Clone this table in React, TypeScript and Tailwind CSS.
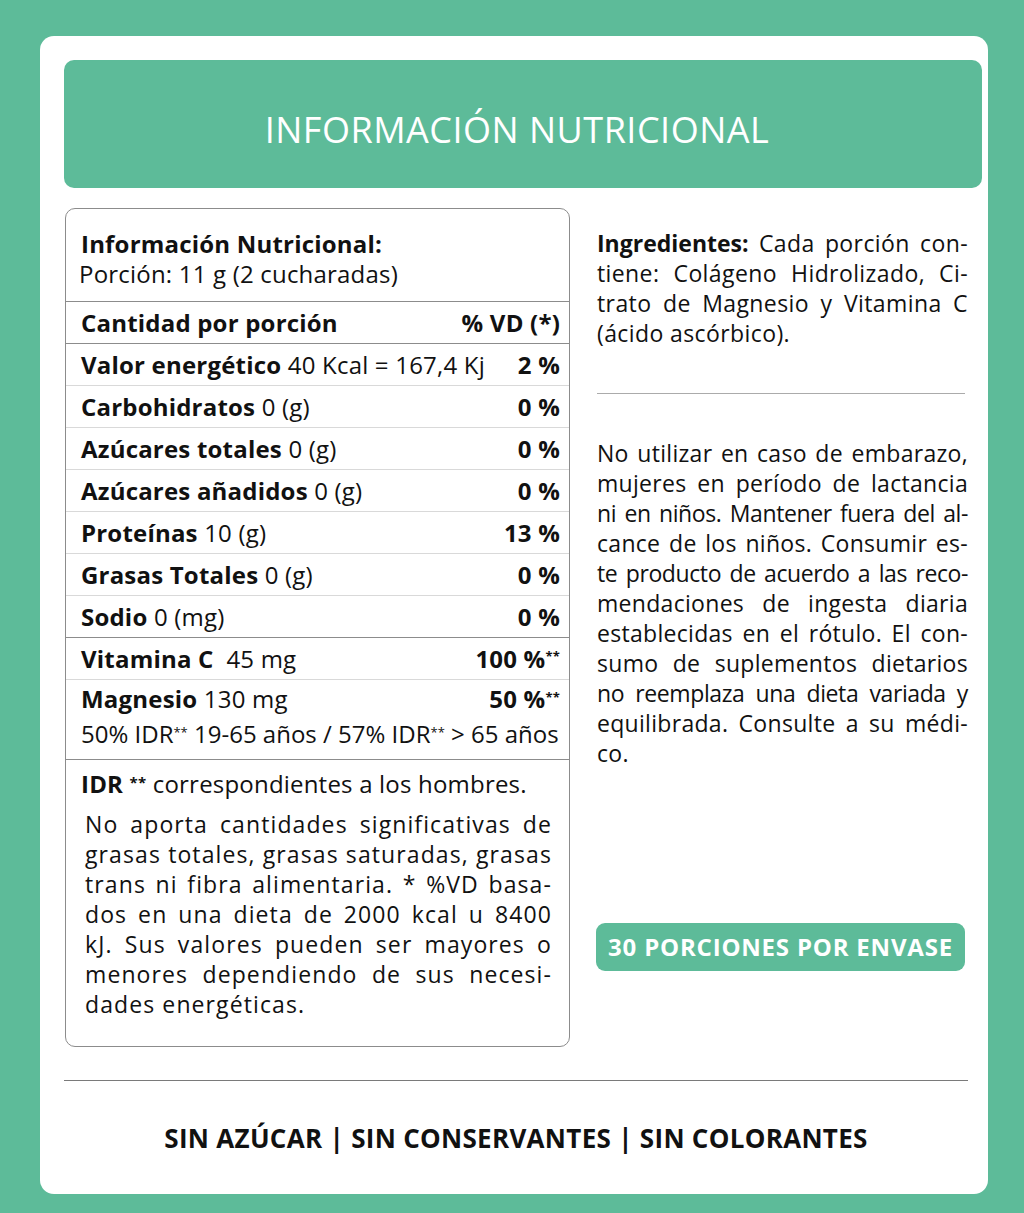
import React from 'react';

const FONT = '[font-family:Open_Sans,Lato,sans-serif]';

// one justified line of a block of running text
const Line = ({
  children,
  last = false,
  tight = false,
}: {
  children: React.ReactNode;
  last?: boolean;
  tight?: boolean;
}) => (
  <span
    className={`block ${last ? 'text-left' : 'text-justify [text-align-last:justify]'} ${
      tight ? 'tracking-[-0.4px]' : ''
    }`}
  >
    {children}
  </span>
);

const Stars = () => <sup className="text-[13px] font-bold">**</sup>;

interface RowProps {
  name: string;
  value: React.ReactNode;
  pct: React.ReactNode;
  border?: 'light' | 'dark';
}

const Row = ({ name, value, pct, border = 'light' }: RowProps) => (
  <div
    className={`flex h-[42px] items-center justify-between pl-[15px] pr-[9px] border-t ${
      border === 'dark' ? 'border-[#8c8c8c]' : 'border-[#d9d9d9]'
    }`}
  >
    <span>
      <span className="font-bold">{name}</span> {value}
    </span>
    <span className="font-bold">{pct}</span>
  </div>
);

const NutritionTable = () => (
  <div className="w-[505px] h-[839px] shrink-0 rounded-[10px] border border-[#8c8c8c] text-[24px] tracking-[0.2px] text-[#111]">
    <div className="h-[92px] pl-[15px] pt-[20px] leading-[30px]">
      <div className="font-bold">Información Nutricional:</div>
      <div className="-ml-[2px]">Porción: 11 g (2 cucharadas)</div>
    </div>
    <div className="flex h-[42px] items-center justify-between border-t border-[#8c8c8c] pl-[15px] pr-[9px] font-bold">
      <span>Cantidad por porción</span>
      <span>% VD (*)</span>
    </div>
    <Row name="Valor energético" value="40 Kcal = 167,4 Kj" pct="2 %" border="dark" />
    <Row name="Carbohidratos" value="0 (g)" pct="0 %" />
    <Row name="Azúcares totales" value="0 (g)" pct="0 %" />
    <Row name="Azúcares añadidos" value="0 (g)" pct="0 %" />
    <Row name="Proteínas" value="10 (g)" pct="13 %" />
    <Row name="Grasas Totales" value="0 (g)" pct="0 %" />
    <Row name="Sodio" value="0 (mg)" pct="0 %" />
    <Row
      name="Vitamina C"
      value={<>&nbsp;45 mg</>}
      pct={<>100 %<Stars /></>}
      border="dark"
    />
    <div className="border-t border-[#d9d9d9] pl-[15px] pr-[9px] pb-[9px]">
      <div className="flex items-center justify-between h-[38px]">
        <span>
          <span className="font-bold">Magnesio</span> 130 mg
        </span>
        <span className="font-bold">
          50 %<Stars />
        </span>
      </div>
      <div className="h-[32px] leading-[32px] tracking-[0px]">
        50% IDR<sup className="text-[13px]">**</sup> 19-65 años / 57% IDR<sup className="text-[13px]">**</sup> &gt; 65 años
      </div>
    </div>
    <div className="border-t border-[#8c8c8c] pl-[15px] pr-[17px] pt-[9px]">
      <div className="h-[30px] leading-[30px]">
        <span className="font-bold">
          IDR <span className="relative -top-[5px] text-[15px]">**</span>
        </span>{' '}
        correspondientes a los hombres.
      </div>
      <div className="mt-[10px] pl-[4px] text-[23px] leading-[30px] tracking-[1.1px]">
        <Line>No aporta cantidades significativas de</Line>
        <Line>grasas totales, grasas saturadas, grasas</Line>
        <Line>trans ni fibra alimentaria. * %VD basa-</Line>
        <Line>dos en una dieta de 2000 kcal u 8400</Line>
        <Line>kJ. Sus valores pueden ser mayores o</Line>
        <Line>menores dependiendo de sus necesi-</Line>
        <Line last>dades energéticas.</Line>
      </div>
    </div>
  </div>
);

const SideColumn = () => (
  <div className="flex w-[371px] flex-col pt-[20px] text-[23px] leading-[30px] text-[#111]">
    <div className="tracking-[0.4px]">
      <Line>
        <span className="font-bold tracking-[0px]">Ingredientes:</span> Cada porción con-
      </Line>
      <Line>tiene: Colágeno Hidrolizado, Ci-</Line>
      <Line>trato de Magnesio y Vitamina C</Line>
      <Line last>(ácido ascórbico).</Line>
    </div>
    <div className="mt-[45px] h-px w-[368px] shrink-0 bg-[#ababab]" />
    <div className="mt-[44px] tracking-[0.3px]">
      <Line>No utilizar en caso de embarazo,</Line>
      <Line>mujeres en período de lactancia</Line>
      <Line tight>ni en niños. Mantener fuera del al-</Line>
      <Line>cance de los niños. Consumir es-</Line>
      <Line tight>te producto de acuerdo a las reco-</Line>
      <Line>mendaciones de ingesta diaria</Line>
      <Line>establecidas en el rótulo. El con-</Line>
      <Line>sumo de suplementos dietarios</Line>
      <Line tight>no reemplaza una dieta variada y</Line>
      <Line>equilibrada. Consulte a su médi-</Line>
      <Line last>co.</Line>
    </div>
    <div className="mt-[155px] flex h-[48px] w-[369px] shrink-0 -ml-[1px] items-center justify-center rounded-[9px] bg-[#5dbb99] text-[24px] font-bold tracking-[0.8px] text-white">
      30 PORCIONES POR ENVASE
    </div>
  </div>
);

export default function App() {
  return (
    <div className={`${FONT} min-h-[1213px] bg-[#5dbb99] pl-[40px] pt-[36px]`}>
      <div className="flex h-[1158px] w-[948px] flex-col rounded-[14px] bg-white pl-[24px] pr-[6px] pt-[24px]">
        <div className="flex h-[128px] shrink-0 items-center justify-center rounded-[10px] bg-[#5dbb99] pt-[12px] pr-[12px] text-[36px] tracking-[0.5px] text-white">
          INFORMACIÓN NUTRICIONAL
        </div>
        <div className="mt-[20px] flex shrink-0 gap-[27px] pl-[1px]">
          <NutritionTable />
          <SideColumn />
        </div>
        <div className="mt-[33px] h-px w-[904px] shrink-0 bg-[#7a7a7a]" />
        <div className="flex h-[115px] w-[904px] shrink-0 items-center justify-center text-[26px] font-bold tracking-[0.3px] text-[#111]">
          SIN AZÚCAR | SIN CONSERVANTES | SIN COLORANTES
        </div>
      </div>
    </div>
  );
}
